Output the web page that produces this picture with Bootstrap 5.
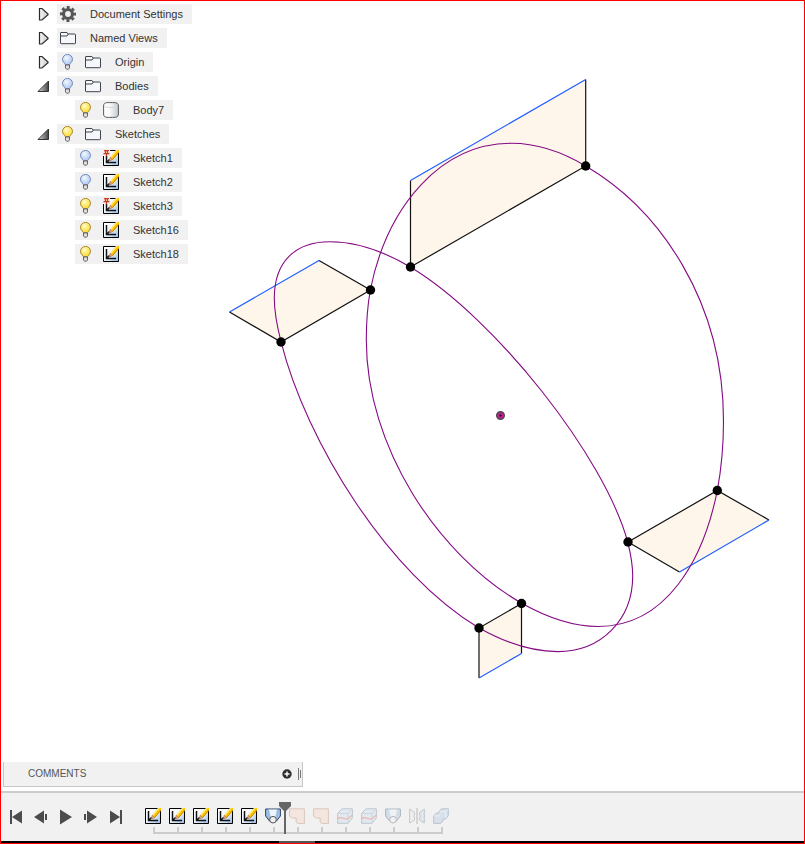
<!DOCTYPE html>
<html lang="en">
<head>
<meta charset="utf-8">
<meta name="viewport" content="width=device-width, initial-scale=1">
<title>Sketch workspace</title>
<link rel="stylesheet" href="https://cdn.jsdelivr.net/npm/bootstrap@5.3.0/dist/css/bootstrap.min.css">
<style>
body { font-family: "Liberation Sans", Arial, sans-serif; font-size: 11px; line-height: 20px; color: #333; background: #fff; }
.workspace { border: 1px solid #f00; }
.scene { pointer-events: none; }
.tree { padding: 3px 0 0 36px; }
.tree-row { height: 20px; margin-bottom: 4px; }
.toggle { width: 12px; height: 20px; margin-right: 8px; }
.toggle svg { display: block; }
.entry { background: #f1f1f1; padding: 0 9px 0 2px; }
.child-row { padding-left: 38px; }
.entry svg { flex: none; }
.bulb, .gear { width: 17px; height: 16px; }
.entry .pic { width: 16px; height: 16px; margin-left: 9px; }
.entry .label { margin-left: 14px; }
.entry .first-pic { margin-left: 1px; }
.comments { width: 300px; height: 25px; margin: 0 0 4px 2px; background: #f1f1f1; border: 1px solid #c8c8c8; border-top: 0; padding: 0 0 0 24px; color: #555; }
.comments-title { font-size: 10px; }
.comments .grip { margin-left: 6px; }
.timeline { height: 50px; background: #f1f1f1; border-top: 2px solid #ccc; padding: 0 8px; }
.transport { gap: 9px; width: 132px; padding-top: 8px; }
.transport button, .step button, .plain { border: 0; padding: 0; background: none; line-height: 0; display: block; }
.steps { padding-top: 15px; }
.step { width: 24px; height: 26px; position: relative; }
.step button { margin: 0 auto; }
.step::before { content: ""; position: absolute; left: 0; right: 0; bottom: 0; height: 2px; background: #ccc; }
.step::after { content: ""; position: absolute; left: 12px; width: 2px; bottom: 0; height: 7px; background: #ccc; }
.step:first-of-type::before { left: 12px; }
.step:last-of-type::before { right: 10px; }
.undone svg { opacity: .35; }
.marker { left: 138px; top: 9px; z-index: 2; }
.status { height: 2px; background: #000; }
.status-thumb { height: 2px; width: 36px; margin-left: 278px; background: #555; }
</style>
<script src="https://cdn.jsdelivr.net/npm/bootstrap@5.3.0/dist/js/bootstrap.bundle.min.js"></script>
</head>
<body>
<svg width="0" height="0" class="position-absolute" aria-hidden="true">
  <defs>
    <linearGradient id="gShade" x1="0" y1="0" x2="1" y2="0"><stop offset="0" stop-color="#f4f4f4"/><stop offset="1" stop-color="#c9cdd1"/></linearGradient>
    <linearGradient id="gTri" x1="0" y1="0" x2="1" y2="0"><stop offset="0" stop-color="#ddd"/><stop offset="1" stop-color="#444"/></linearGradient>
    <linearGradient id="gSky" x1="0" y1="0" x2="1" y2="1"><stop offset="0" stop-color="#fff"/><stop offset=".45" stop-color="#f4f9ff"/><stop offset="1" stop-color="#8fb9e6"/></linearGradient>
    <linearGradient id="gBody" x1="0" y1="0" x2="1" y2="0"><stop offset="0" stop-color="#fff"/><stop offset=".4" stop-color="#fafafa"/><stop offset="1" stop-color="#c4c8cc"/></linearGradient>
    <radialGradient id="gOn" cx=".4" cy=".35"><stop offset="0" stop-color="#fffbd0"/><stop offset="1" stop-color="#ffe44d"/></radialGradient>
    <radialGradient id="gOff" cx=".4" cy=".35"><stop offset="0" stop-color="#f4f9ff"/><stop offset="1" stop-color="#bcd3f4"/></radialGradient>
  </defs>
  <symbol id="closed" viewBox="0 0 12 20"><path d="M2.500 4.500h2.500l6 5.500v.8l-6 5.200H2.500z" fill="url(#gShade)" stroke="#2b2b2b" stroke-width="1.200"/></symbol>
  <symbol id="open" viewBox="0 0 12 20"><path d="M1 15.500L11.500 5v10.500z" fill="url(#gTri)" stroke="#333" stroke-width="1"/></symbol>
  <symbol id="gear" viewBox="0 0 17 16"><g fill="none" stroke="#555"><circle cx="9" cy="8" r="4.500" stroke-width="3.200"/><circle cx="9" cy="8" r="6.800" stroke-width="2.400" stroke-dasharray="3 2.340" stroke-dashoffset="1.500"/></g></symbol>
  <symbol id="folder" viewBox="0 0 16 16"><path d="M.5 13.500V2.500h6l1 1.500h7v9.500z" fill="#f3f5f8"/><path d="M1 2.500h6l1 1.500h6.500q1 0 1 1v8q0 .7-.7.700H1.200q-.7 0-.7-.7V3q0-.5.5-.5z" fill="#f5f7fa" stroke="#3d424d"/><path d="M1 6h6l1.300-2" fill="none" stroke="#3d424d"/></symbol>
  <symbol id="body" viewBox="0 0 16 16"><path d="M.6 4C.6.200 3.500.600 8 .6s7.400-.4 7.400 3.400v8c0 3.800-3.400 3.400-7.400 3.400S.6 15.800.6 12z" fill="url(#gBody)" stroke="#555b63"/><path d="M1.400 4c1.500 2 11.700 2 13.200 0" fill="none" stroke="#d5d8db"/></symbol>
  <symbol id="bulb-on" viewBox="0 0 17 16"><path d="M6.200 10.500C5.500 8.500 3.500 8 3.500 5.400a5 5 0 0 1 10 0c0 2.600-2 3.100-2.700 5.100z" fill="url(#gOn)" stroke="#a8852c"/><path d="M6.500 11v3l1.200 1.300h1.600l1.200-1.300v-3z" fill="#e0e0e0" stroke="#666" stroke-width="1"/></symbol>
  <symbol id="bulb-off" viewBox="0 0 17 16"><path d="M6.200 10.500C5.500 8.500 3.500 8 3.500 5.400a5 5 0 0 1 10 0c0 2.600-2 3.100-2.700 5.100z" fill="url(#gOff)" stroke="#7389b8"/><path d="M6.500 11v3l1.200 1.300h1.600l1.200-1.300v-3z" fill="#e0e0e0" stroke="#666" stroke-width="1"/></symbol>
  <symbol id="sketch" viewBox="0 0 16 16"><path d="M.5.5h15v15H.5z" fill="url(#gSky)" stroke="#000"/><path d="M3.500 3v9.500H13M3.500 12.500l3-3" fill="none" stroke="#111" stroke-width="1.500"/><path d="M6 11l1.300-3.800L9.800 9.600z" fill="#e9a57c" stroke="#9a5a34" stroke-width=".6"/><path d="M7.300 7L13 0H16v2.600L10 9.700z" fill="#ffc400"/><path d="M8 7l5.800-6.800" stroke="#fff08a" stroke-width="1.200"/><path d="M9.800 9.300L16 2" stroke="#b87400" stroke-width=".8"/></symbol>
  <symbol id="sketch-pin" viewBox="0 0 16 16"><use href="#sketch"/><path d="M0 0h7v6H0z" fill="#fbe9e4"/><path d="M1 .7h5M2.500 1v2M4.500 1v2M.5 3.700h6M3.500 4v2.500" stroke="#c8391f" stroke-width="1.200" fill="none"/></symbol>
  <symbol id="loft" viewBox="0 0 16 16"><path d="M.6 1h14.800v7L11.500 13h-7L.6 8z" fill="#9dbde2" stroke="#2c4468"/><path d="M3.500 1.500h9L11 9.500H5z" fill="#edf5fe"/><path d="M3.500 1.500L5.500 10M12.500 1.500l-2 8.500" stroke="#7f9cc2" stroke-width=".6"/><circle cx="8" cy="11.700" r="3.300" fill="#f2f2f2" stroke="#555"/></symbol>
  <symbol id="patch" viewBox="0 0 16 16"><path d="M.6.800h14.800v14.600H8.500L7.200 14v-4H2.500L.6 8z" fill="#fbd3bd" stroke="#b07a5e"/></symbol>
  <symbol id="split" viewBox="0 0 16 16"><path d="M.6 5.500L5 .8h10.400v9L11 15.300H.6z" fill="#c8d9ec" stroke="#64788f"/><path d="M1 5.500h10L15.300 1M11 5.500V15" fill="none" stroke="#8799ad" stroke-width=".8"/><path d="M1 10.500c3-3 6 2 10 0l4-3" fill="none" stroke="#e04830" stroke-width="1.100"/></symbol>
  <symbol id="mirror" viewBox="0 0 16 16"><path d="M.7 1l4.800 3.500v2.500L4.500 8l1 1.500V12L.7 15z" fill="#eee" stroke="#777"/><path d="M15.300 1l-4.800 3.500V7l1 1-1 1.500V12l4.800 3z" fill="#c2d5ea" stroke="#64788f"/><path d="M8 0v16" stroke="#555"/></symbol>
  <symbol id="combine" viewBox="0 0 16 16"><path d="M.7 8l2.500-2.800H6V3.500L8.500.8h6.800v7L12.500 11H10v2l-2.300 2.400h-7z" fill="#a9c3e2" stroke="#55708f"/><path d="M1 8h4.500l2-2.500M6.500 3.500h6l2.500-2.500M12.500 3.700V10" fill="none" stroke="#e7f0fa" stroke-width=".9"/></symbol>
</svg>

<div class="workspace d-flex flex-column min-vh-100">
  <main class="position-relative flex-grow-1 d-flex flex-column">
    <svg class="scene position-absolute top-0 start-0 w-100 h-100" viewBox="1 1 803 790" role="img" aria-label="Two closed sketch curves joined by four profiles">
      <g fill="#fff6eb">
        <path d="M410.500 180.500L585.700 79.500V166L410.500 267z"/>
        <path d="M229.500 312L319 260.500L370.500 290L281 342z"/>
        <path d="M628 542L717.300 490.500L769 520L679.500 572z"/>
        <path d="M479 628L521.500 603.500V653.500L479 678z"/>
      </g>
      <g fill="none" stroke="#111" stroke-width="1.200">
        <path d="M410.500 180.500V267L585.700 166V79.500"/>
        <path d="M229.500 312L281 342L370.500 290L319 260.500"/>
        <path d="M679.500 572L628 542L717.300 490.500L769 520"/>
        <path d="M479 678V628L521.500 603.500V653.500"/>
      </g>
      <path d="M410.500 180.500L585.700 79.500M229.500 312L319 260.500M679.500 572L769 520M479 678L521.500 653.500" stroke="#1f5fff" stroke-width="1.200"/>
      <g fill="none" stroke="#840a84" stroke-width="1.100">
        <path d="M511.500 143.300C537 143.300 563 152.500 585.700 166C660.500 210 723.500 302 723.500 421C723.500 444 721.500 468 717.300 490.500C703.300 560.500 666 626.500 598 626.500C572 626.500 546 617 521.700 603.300C436.700 554 366.300 446 366.300 340C366.300 323 367.500 306 370.300 290C387.300 205 441.500 143.300 511.500 143.300z"/>
        <path d="M330 241.700C357 241.700 385 252 410.300 267C495.300 318 604.700 457 627.700 542C630.500 553 632.700 564 632.700 576C632.700 619 602 651.600 557.700 651.600C531 651.600 504 642 478.700 627.700C388.700 574.600 306 441.600 281 341.600C277 326 274.300 312 274.300 298C274.300 262 295 241.700 330 241.700z"/>
      </g>
      <g fill="#000">
        <circle cx="585.700" cy="166" r="4.700"/><circle cx="410.500" cy="267" r="4.700"/><circle cx="370.500" cy="290" r="4.700"/><circle cx="281" cy="342" r="4.700"/>
        <circle cx="717.300" cy="490.500" r="4.700"/><circle cx="628" cy="542" r="4.700"/><circle cx="521.500" cy="603.500" r="4.700"/><circle cx="479" cy="628" r="4.700"/>
      </g>
      <circle cx="500.500" cy="415.500" r="3.800" fill="#c02490" stroke="#4a4a4a" stroke-width="1.400"/><circle cx="500.500" cy="415.500" r="1.200" fill="#3a1030"/>
    </svg>

    <ul class="tree list-unstyled mb-auto position-relative">
      <li class="tree-row d-flex"><button class="toggle plain" aria-label="Expand Document Settings"><svg width="12" height="20"><use href="#closed"/></svg></button><div class="entry d-flex align-items-center"><svg class="gear"><use href="#gear"/></svg><span class="label">Document Settings</span></div></li>
      <li class="tree-row d-flex"><button class="toggle plain" aria-label="Expand Named Views"><svg width="12" height="20"><use href="#closed"/></svg></button><div class="entry d-flex align-items-center"><svg class="pic first-pic"><use href="#folder"/></svg><span class="label">Named Views</span></div></li>
      <li class="tree-row d-flex"><button class="toggle plain" aria-label="Expand Origin"><svg width="12" height="20"><use href="#closed"/></svg></button><div class="entry d-flex align-items-center"><svg class="bulb"><use href="#bulb-off"/></svg><svg class="pic"><use href="#folder"/></svg><span class="label">Origin</span></div></li>
      <li class="tree-row d-flex"><button class="toggle plain" aria-label="Collapse Bodies"><svg width="12" height="20"><use href="#open"/></svg></button><div class="entry d-flex align-items-center"><svg class="bulb"><use href="#bulb-off"/></svg><svg class="pic"><use href="#folder"/></svg><span class="label">Bodies</span></div></li>
      <li class="tree-row child-row d-flex"><div class="entry d-flex align-items-center"><svg class="bulb"><use href="#bulb-on"/></svg><svg class="pic"><use href="#body"/></svg><span class="label">Body7</span></div></li>
      <li class="tree-row d-flex"><button class="toggle plain" aria-label="Collapse Sketches"><svg width="12" height="20"><use href="#open"/></svg></button><div class="entry d-flex align-items-center"><svg class="bulb"><use href="#bulb-on"/></svg><svg class="pic"><use href="#folder"/></svg><span class="label">Sketches</span></div></li>
      <li class="tree-row child-row d-flex"><div class="entry d-flex align-items-center"><svg class="bulb"><use href="#bulb-off"/></svg><svg class="pic"><use href="#sketch-pin"/></svg><span class="label">Sketch1</span></div></li>
      <li class="tree-row child-row d-flex"><div class="entry d-flex align-items-center"><svg class="bulb"><use href="#bulb-off"/></svg><svg class="pic"><use href="#sketch"/></svg><span class="label">Sketch2</span></div></li>
      <li class="tree-row child-row d-flex"><div class="entry d-flex align-items-center"><svg class="bulb"><use href="#bulb-on"/></svg><svg class="pic"><use href="#sketch-pin"/></svg><span class="label">Sketch3</span></div></li>
      <li class="tree-row child-row d-flex"><div class="entry d-flex align-items-center"><svg class="bulb"><use href="#bulb-on"/></svg><svg class="pic"><use href="#sketch"/></svg><span class="label">Sketch16</span></div></li>
      <li class="tree-row child-row d-flex"><div class="entry d-flex align-items-center"><svg class="bulb"><use href="#bulb-on"/></svg><svg class="pic"><use href="#sketch"/></svg><span class="label">Sketch18</span></div></li>
    </ul>

    <section class="comments d-flex align-items-center position-relative">
      <span class="comments-title me-auto">COMMENTS</span>
      <button class="plain" aria-label="Add comment"><svg width="10" height="10"><circle cx="5" cy="5" r="4.700" fill="#2e2e2e"/><path d="M5 2.500v5M2.500 5h5" stroke="#fff" stroke-width="1.400"/></svg></button>
      <svg class="grip" width="4" height="12"><path d="M.5 0v12M2.500 2v8" stroke="#777"/></svg>
    </section>
  </main>

  <footer class="timeline d-flex align-items-start">
    <div class="transport d-flex">
      <button aria-label="Go to start"><svg width="16" height="32"><path d="M1 9h2v14H1zM13 9.500v13L3 16z" fill="#4a4c4e"/></svg></button>
      <button aria-label="Step back"><svg width="16" height="32"><path d="M10 9.500v13L0 16zM11 13h2v6h-2z" fill="#4a4c4e"/></svg></button>
      <button aria-label="Play"><svg width="16" height="32"><path d="M1 8.500v15L13 16z" fill="#4a4c4e"/></svg></button>
      <button aria-label="Step forward"><svg width="16" height="32"><path d="M3 9.500v13L13 16zM0 13h2v6H0z" fill="#4a4c4e"/></svg></button>
      <button aria-label="Go to end"><svg width="16" height="32"><path d="M1 9.500v13L11 16zM11 9h2v14h-2z" fill="#4a4c4e"/></svg></button>
    </div>
    <div class="steps d-flex position-relative">
      <div class="step"><button aria-label="Sketch1"><svg width="16" height="16"><use href="#sketch"/></svg></button></div>
      <div class="step"><button aria-label="Sketch2"><svg width="16" height="16"><use href="#sketch"/></svg></button></div>
      <div class="step"><button aria-label="Sketch3"><svg width="16" height="16"><use href="#sketch"/></svg></button></div>
      <div class="step"><button aria-label="Sketch16"><svg width="16" height="16"><use href="#sketch"/></svg></button></div>
      <div class="step"><button aria-label="Sketch18"><svg width="16" height="16"><use href="#sketch"/></svg></button></div>
      <div class="step"><button aria-label="Loft"><svg width="16" height="16"><use href="#loft"/></svg></button></div>
      <div class="step undone"><button aria-label="Patch"><svg width="16" height="16"><use href="#patch"/></svg></button></div>
      <div class="step undone"><button aria-label="Patch"><svg width="16" height="16"><use href="#patch"/></svg></button></div>
      <div class="step undone"><button aria-label="Split"><svg width="16" height="16"><use href="#split"/></svg></button></div>
      <div class="step undone"><button aria-label="Split"><svg width="16" height="16"><use href="#split"/></svg></button></div>
      <div class="step undone"><button aria-label="Loft"><svg width="16" height="16"><use href="#loft"/></svg></button></div>
      <div class="step undone"><button aria-label="Mirror"><svg width="16" height="16"><use href="#mirror"/></svg></button></div>
      <div class="step undone"><button aria-label="Combine"><svg width="16" height="16"><use href="#combine"/></svg></button></div>
      <svg class="marker position-absolute" width="12" height="32" aria-hidden="true"><path d="M0 0h12v4L7 9v23H5V9L0 4z" fill="#666"/></svg>
    </div>
  </footer>
  <div class="status"><div class="status-thumb"></div></div>
</div>
</body>
</html>
